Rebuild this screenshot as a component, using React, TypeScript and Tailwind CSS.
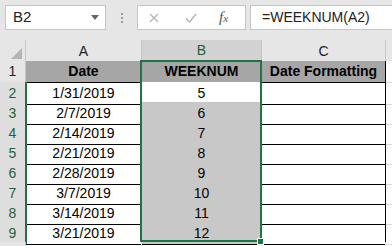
import React from "react";

const rows = [
  { date: "1/31/2019", week: 5 },
  { date: "2/7/2019", week: 6 },
  { date: "2/14/2019", week: 7 },
  { date: "2/21/2019", week: 8 },
  { date: "2/28/2019", week: 9 },
  { date: "3/7/2019", week: 10 },
  { date: "3/14/2019", week: 11 },
  { date: "3/21/2019", week: 12 },
];

const grid = "grid grid-cols-[26px_116px_120px_124px_1fr]";

export default function App() {
  return (
    <div
      className="w-[392px] h-[246px] overflow-hidden bg-[#e6e6e6] text-[14px] text-black"
      style={{ fontFamily: '"Liberation Sans", Arial, sans-serif' }}
    >
      {/* formula bar */}
      <div className="h-[40px] flex items-start pt-[5px] pl-[5px]">
        <div className="w-[101px] h-[25px] bg-white border border-[#c6c6c6] flex items-center justify-between pl-[7px] pr-[6px]">
          <span className="text-[15px] text-[#222]">B2</span>
          <svg width="8" height="5" viewBox="0 0 8 5">
            <path d="M0 0h8L4 5z" fill="#666" />
          </svg>
        </div>
        <div className="w-[31px] h-[25px] flex flex-col items-center justify-center gap-[2px]">
          <span className="w-[2px] h-[2px] bg-[#9a9a9a]" />
          <span className="w-[2px] h-[2px] bg-[#9a9a9a]" />
          <span className="w-[2px] h-[2px] bg-[#9a9a9a]" />
        </div>
        <div className="w-[109px] h-[25px] bg-white border border-[#c6c6c6] flex items-center">
          <svg className="ml-[11px]" width="10" height="10" viewBox="0 0 10 10">
            <path d="M1 1l8 8M9 1l-8 8" stroke="#b5b5b5" strokeWidth="1.3" />
          </svg>
          <svg className="ml-[26px]" width="12" height="10" viewBox="0 0 12 10">
            <path d="M1 5.5l3.5 3.5L11 1" stroke="#b5b5b5" strokeWidth="1.5" fill="none" />
          </svg>
          <span
            className="ml-[22px] italic text-[15px] text-[#555]"
            style={{ fontFamily: '"Liberation Serif", "Times New Roman", serif' }}
          >
            f<span className="text-[11px]">x</span>
          </span>
        </div>
        <div className="ml-[4px] flex-1 h-[25px] bg-white border border-[#c6c6c6] border-r-0 flex items-center pl-[11px] text-[#222]">
          =WEEKNUM(A2)
        </div>
      </div>

      {/* column headers */}
      <div className={`${grid} h-[21px] border-b border-[#c6c6c6]`}>
        <div className="relative border-r border-[#c6c6c6] bg-[#e6e6e6]">
          <svg className="absolute right-[3px] bottom-[3px]" width="11" height="11" viewBox="0 0 11 11">
            <path d="M11 0v11H0z" fill="#b4b4b4" />
          </svg>
        </div>
        <div className="flex items-center justify-center border-r border-[#c6c6c6] bg-[#e6e6e6] text-[#222]">A</div>
        <div className="flex items-center justify-center bg-[#d2d2d2] text-[#1e5f3c] border-r border-[#c6c6c6] border-b-2 border-b-[#217346] -mb-px">B</div>
        <div className="flex items-center justify-center border-r border-[#c6c6c6] bg-[#e6e6e6] text-[#222]">C</div>
        <div className="bg-[#e6e6e6]" />
      </div>

      {/* sheet */}
      <div className="relative bg-white">
        <div className={`${grid} h-[21px]`}>
          <div className="flex items-center justify-center bg-[#e6e6e6] border-r border-b border-[#c6c6c6] text-[#222]">1</div>
          <div className="flex items-center justify-center bg-[#a6a6a6] border-r border-b border-black font-bold">Date</div>
          <div className="flex items-center justify-center bg-[#a6a6a6] border-r border-b border-black font-bold">WEEKNUM</div>
          <div className="flex items-center justify-center bg-[#a6a6a6] border-r border-b border-black font-bold">Date Formatting</div>
          <div className="border-b border-[#dadada]" />
        </div>
        {rows.map((r, i) => (
          <div key={r.date} className={`${grid} h-[20px]`}>
            <div className="flex items-center justify-center bg-[#dedede] border-r-2 border-r-[#217346] border-b border-b-[#c6c6c6] text-[#1e5f3c] -mr-px">
              {i + 2}
            </div>
            <div className="flex items-center justify-center border-r border-b border-black pt-[1px]">{r.date}</div>
            <div
              className={`flex items-center justify-center border-r border-b border-black pt-[1px] ${
                i === 0 ? "bg-white" : "bg-[#c8c8c8]"
              }`}
            >
              {r.week}
            </div>
            <div className="border-r border-b border-black" />
            <div className="border-b border-[#dadada]" />
          </div>
        ))}
        <div className={`${grid} h-[20px]`}>
          <div className="bg-[#e6e6e6] border-r border-[#c6c6c6]" />
          <div className="border-r border-[#dadada]" />
          <div className="border-r border-[#dadada]" />
          <div className="border-r border-[#dadada]" />
          <div />
        </div>

        {/* selection */}
        <div className="absolute left-[140px] top-[-1px] w-[122px] h-[182px] border-2 border-[#217346] pointer-events-none" />
        <div className="absolute left-[257px] top-[177px] w-[7px] h-[7px] bg-[#217346] border border-white" />
      </div>
    </div>
  );
}
